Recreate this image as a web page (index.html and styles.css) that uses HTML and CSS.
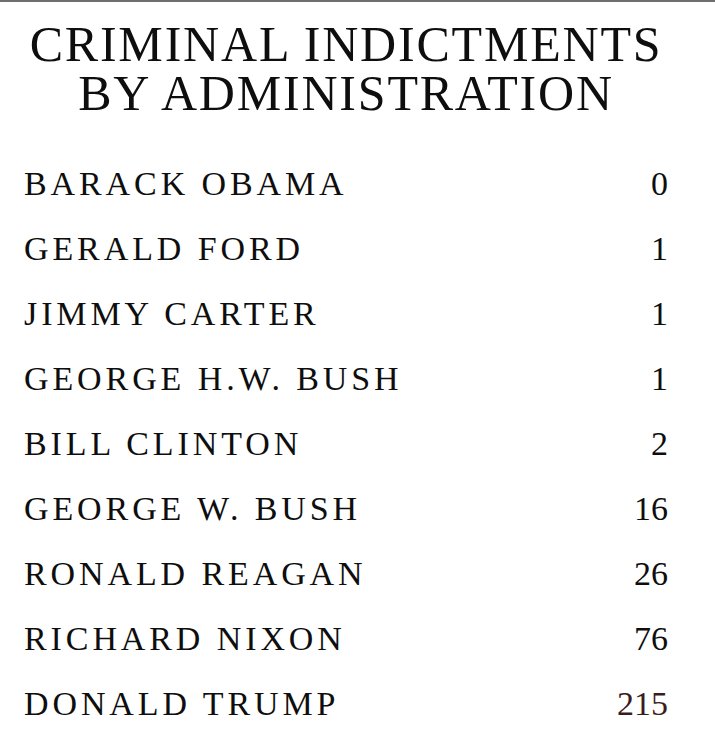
FILE: index.html
```html
<!DOCTYPE html>
<html lang="en">
<head>
<meta charset="utf-8">
<title>Criminal Indictments by Administration</title>
<link rel="stylesheet" href="styles.css">
</head>
<body>
<main class="frame">
  <h1 class="title"><span class="title-line">CRIMINAL INDICTMENTS</span><span class="title-line">BY ADMINISTRATION</span></h1>
  <ul class="list">
    <li class="row"><span class="name">BARACK OBAMA</span><span class="num">0</span></li>
    <li class="row"><span class="name">GERALD FORD</span><span class="num">1</span></li>
    <li class="row"><span class="name">JIMMY CARTER</span><span class="num">1</span></li>
    <li class="row"><span class="name">GEORGE H.W. BUSH</span><span class="num">1</span></li>
    <li class="row"><span class="name">BILL CLINTON</span><span class="num">2</span></li>
    <li class="row"><span class="name">GEORGE W. BUSH</span><span class="num">16</span></li>
    <li class="row"><span class="name">RONALD REAGAN</span><span class="num">26</span></li>
    <li class="row"><span class="name">RICHARD NIXON</span><span class="num">76</span></li>
    <li class="row"><span class="name">DONALD TRUMP</span><span class="num num-red">215</span></li>
  </ul>
</main>
</body>
</html>
```
FILE: styles.css
```css
html, body {
  margin: 0;
  padding: 0;
  background: #ffffff;
}
body {
  font-family: "Liberation Serif", "Times New Roman", serif;
  color: #0e0e0e;
}
.frame {
  border-top: 2px solid #6e6e6e;
  padding: 18px 47px 0 24px;
  height: 722px;
}
.title {
  margin: 0;
  font-weight: normal;
  font-size: 50px;
  line-height: 49px;
  letter-spacing: 1.8px;
  text-align: center;
}
.title-line {
  display: block;
}
.list {
  list-style: none;
  margin: 33px 0 0 0;
  padding: 0;
}
.row {
  display: flex;
  justify-content: space-between;
  align-items: baseline;
  font-size: 34px;
  line-height: 65px;
}
.name {
  letter-spacing: 3.9px;
}
.num {
  letter-spacing: 0;
}
.num-red {
  color: #3a1c20;
}
```
